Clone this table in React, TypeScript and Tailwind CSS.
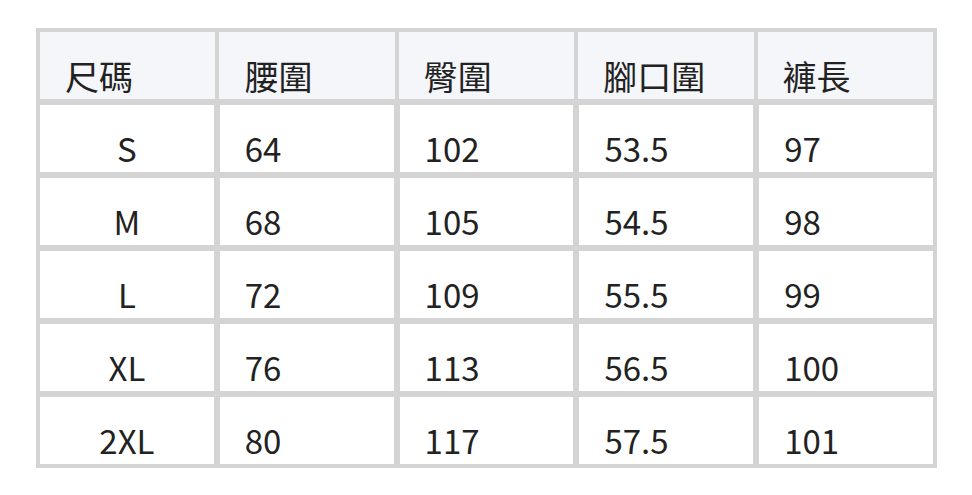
import React from 'react';

const headers = ['尺碼', '腰圍', '臀圍', '腳口圍', '褲長'];

const rows = [
    ['S', '64', '102', '53.5', '97'],
    ['M', '68', '105', '54.5', '98'],
    ['L', '72', '109', '55.5', '99'],
    ['XL', '76', '113', '56.5', '100'],
    ['2XL', '80', '117', '57.5', '101'],
];

export default function App() {
    return (
        <div className="min-h-screen bg-white pl-[36px] pt-[28px] text-[#222]" style={{ fontFamily: '"Noto Sans CJK TC", "Noto Sans", sans-serif' }}>
            <div className="flex w-[901px] flex-col gap-[6px] bg-[#d4d4d4] p-[4px]">
                {/* Header row */}
                <div className="grid grid-cols-5 gap-x-[4px]">
                    {headers.map((h) => (
                        <div key={h} className="flex h-[67px] items-center bg-[#f5f6fa] pl-[25px] pt-[21px] text-[34px] leading-none">
                            {h}
                        </div>
                    ))}
                </div>
                {rows.map((row) => (
                    <div key={row[0]} className="grid grid-cols-5 gap-x-[6px]">
                        {row.map((cell, i) => (
                            <div
                                key={i}
                                className={
                                    i === 0
                                        ? 'flex h-[67px] items-center justify-center bg-white pt-[19px] text-[33px] leading-none'
                                        : 'flex h-[67px] items-center bg-white pl-[25px] pt-[19px] text-[33px] leading-none'
                                }
                            >
                                {cell}
                            </div>
                        ))}
                    </div>
                ))}
            </div>
        </div>
    );
}
